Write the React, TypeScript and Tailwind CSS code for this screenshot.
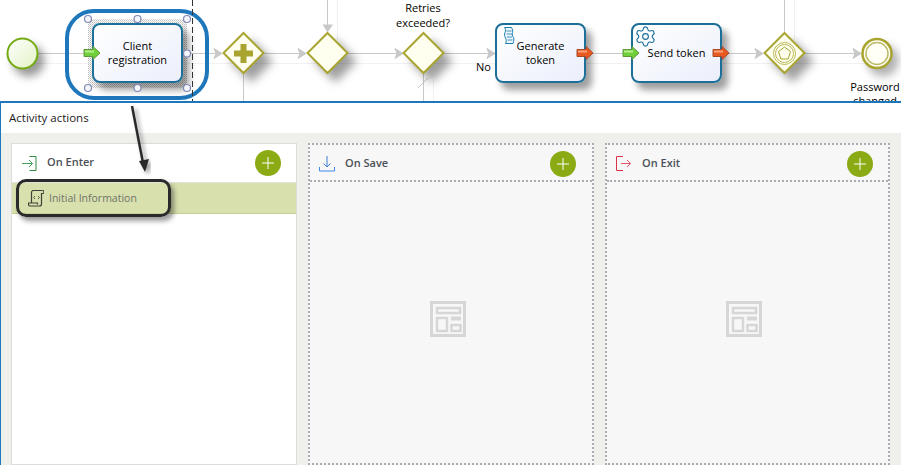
import { Settings } from "lucide-react";

const FLOW = "#c9c9c9";
const GATE = "#a8a42f";

const Diamond = ({ cx, children }: { cx: number; children?: React.ReactNode }) => (
  <g>
    <polygon
      points={`${cx},33 ${cx + 20},53 ${cx},73 ${cx - 20},53`}
      fill="#fffff0"
      stroke={GATE}
      strokeWidth="2"
      className="drop-shadow-[8px_8px_5px_rgba(0,0,0,0.38)]"
    />
    {children}
  </g>
);

const FlowHead = ({ x }: { x: number }) => (
  <polygon points={`${x},48.5 ${x + 8},53.5 ${x},58.5 ${x + 2},53.5`} fill="#c8c8c8" stroke="#c8c8c8" />
);

const PortArrow = ({ x, out }: { x: number; out?: boolean }) => (
  <svg width="18" height="16" viewBox="0 0 18 16" className="absolute" style={{ left: x, top: 45 }}>
    <polygon
      points="1,4.5 10,4.5 10,1.5 17,8 10,14.5 10,11.5 1,11.5"
      fill={out ? "#e9581f" : "#6fd03c"}
      stroke={out ? "#a8482a" : "#5f9a3a"}
    />
    <rect x="2" y="5.5" width="9" height="2" fill={out ? "#f7a27c" : "#b6ee8c"} />
  </svg>
);

const Task = ({ left, children }: { left: number; children: React.ReactNode }) => (
  <div
    className="absolute top-[23px] flex h-[60px] w-[91px] items-center justify-center rounded-lg border-2 border-[#1b6f99] bg-gradient-to-br from-white to-[#ebeffb] text-center text-[11px] leading-[14px] text-black shadow-[6px_7px_7px_rgba(0,0,0,0.38)]"
    style={{ left }}
  >
    {children}
  </div>
);

const Diagram = () => (
  <div className="relative h-[101px] overflow-hidden bg-white">
    <svg width="901" height="101" className="absolute left-0 top-0">
      <defs>
        <linearGradient id="startFill" x1="0" y1="0" x2="1" y2="1">
          <stop offset="0" stopColor="#ffffff" />
          <stop offset="1" stopColor="#e2f3c4" />
        </linearGradient>
        <pattern id="hatch" width="2" height="2" patternUnits="userSpaceOnUse">
          <rect width="1" height="1" fill="#bdbdbd" />
          <rect x="1" y="1" width="1" height="1" fill="#d4d4d4" />
        </pattern>
      </defs>

      {/* connector shadows */}
      <g stroke="#f1f1f1" strokeWidth="1">
        <line x1="30" y1="63.5" x2="880" y2="63.5" />
        <line x1="337.5" y1="0" x2="337.5" y2="40" />
        <line x1="433.5" y1="80" x2="433.5" y2="101" />
        <line x1="794.5" y1="0" x2="794.5" y2="40" />
      </g>

      {/* connectors */}
      <g stroke={FLOW} strokeWidth="1">
        <line x1="37" y1="53.5" x2="88" y2="53.5" />
        <line x1="183" y1="53.5" x2="218" y2="53.5" />
        <line x1="263" y1="53.5" x2="303" y2="53.5" />
        <line x1="347" y1="53.5" x2="398" y2="53.5" />
        <line x1="443" y1="53.5" x2="490" y2="53.5" />
        <line x1="590" y1="53.5" x2="630" y2="53.5" />
        <line x1="726" y1="53.5" x2="760" y2="53.5" />
        <line x1="804" y1="53.5" x2="858" y2="53.5" />
        <line x1="243.5" y1="73" x2="243.5" y2="101" />
        <line x1="327.5" y1="0" x2="327.5" y2="28" />
        <line x1="423.5" y1="73" x2="423.5" y2="101" />
        <line x1="784.5" y1="0" x2="784.5" y2="33" />
        <line x1="418" y1="88" x2="428" y2="78" />
      </g>
      <FlowHead x={214} />
      <FlowHead x={298} />
      <FlowHead x={395} />
      <FlowHead x={487} />
      <FlowHead x={755} />
      <FlowHead x={853} />
      <polygon points="322.5,24.5 333,24.5 327.5,32.5" fill="#c8c8c8" />

      {/* start and end events */}
      <circle
        cx="22.5"
        cy="53.5"
        r="15"
        fill="url(#startFill)"
        stroke="#74ab14"
        strokeWidth="2"
        className="drop-shadow-[6px_7px_4px_rgba(0,0,0,0.4)]"
      />
      <circle cx="877" cy="53.5" r="14.5" fill="#fffff5" stroke={GATE} strokeWidth="2.5" className="drop-shadow-[6px_7px_4px_rgba(0,0,0,0.3)]" />
      <circle cx="877" cy="53.5" r="11" fill="#fffff5" stroke="#bdbb6a" strokeWidth="1.5" />

      {/* gateways */}
      <Diamond cx={243.5}>
        <path d="M240.5 44h6v6.5h6.5v6h-6.5v6.5h-6v-6.5h-6.5v-6h6.5z" fill={GATE} />
      </Diamond>
      <Diamond cx={327.5} />
      <Diamond cx={423.5} />
      <Diamond cx={784.5}>
        <circle cx="784.5" cy="53.5" r="11" fill="none" stroke={GATE} strokeWidth="0.8" />
        <circle cx="784.5" cy="53.5" r="9" fill="none" stroke={GATE} strokeWidth="0.8" />
        <polygon points="784.5,47 790.5,51.5 788.2,59 780.8,59 778.5,51.5" fill="none" stroke={GATE} />
      </Diamond>

      {/* selected element frame */}
      <rect x="88" y="19" width="99" height="69" fill="url(#hatch)" />
      <rect x="67" y="11" width="140" height="87" rx="27" fill="none" stroke="#1f77bb" strokeWidth="4" />
    </svg>

    <Task left={92}>
      Client
      <br />
      registration
    </Task>
    <Task left={495}>
      <span>
        Generate
        <br />
        token
      </span>
    </Task>
    <Task left={631}>Send token</Task>

    <svg width="901" height="101" className="absolute left-0 top-0">
      <g fill="#f4f5fb" stroke="#7f88b4" strokeWidth="1.2">
        <circle cx="88" cy="19" r="3.5" />
        <circle cx="137.5" cy="19" r="3.5" />
        <circle cx="187" cy="19" r="3.5" />
        <circle cx="187" cy="53.5" r="3.5" />
        <circle cx="88" cy="88" r="3.5" />
        <circle cx="137.5" cy="88" r="3.5" />
        <circle cx="187" cy="88" r="3.5" />
      </g>
      <line x1="192.5" y1="0" x2="192.5" y2="101" stroke="#333" strokeDasharray="6 3" />
    </svg>

    <PortArrow x={83} />
    <PortArrow x={576} out />
    <PortArrow x={622} />
    <PortArrow x={712} out />

    {/* script task marker */}
    <svg width="12" height="18" viewBox="0 0 12 18" fill="none" stroke="#1b7fb0" className="absolute left-[503px] top-[27px]">
      <path d="M1.5.5h7c1 2 1.500 3 1 5s-.5 3 1 5c.5 2 .5 3.500-.5 6H2.500c1-2 1-3.500 0-5.500S1 7.500 2 5.500 2.500 2 1.500.5z" fill="#eef5fb" />
      <path d="M3.500 4h5M3.500 7h5.500M4 10h5M4.500 13h5" strokeWidth="0.8" />
    </svg>
    <Settings size={23} strokeWidth={1.2} className="absolute left-[634px] top-[25px] text-[#1b6f99]" />

    <div className="absolute left-[383px] top-0 w-20 text-center text-[11px] leading-[15px] text-black">
      Retries
      <br />
      exceeded?
    </div>
    <div className="absolute left-[476px] top-[59px] text-[11px] leading-[15px] text-black">No</div>
    <div className="absolute left-[835px] top-[80px] w-20 text-center text-[11px] leading-[14px] text-black">
      Password
      <br />
      changed
    </div>
  </div>
);

const AddButton = () => (
  <button className="flex h-[26px] w-[26px] shrink-0 items-center justify-center rounded-full bg-[#8aab13]">
    <svg width="12" height="12" viewBox="0 0 12 12">
      <path d="M6 0v12M0 6h12" stroke="#fff" strokeWidth="1" />
    </svg>
  </button>
);

const EnterIcon = () => (
  <svg width="15" height="15" viewBox="0 0 15 15" fill="none">
    <path d="M7.500.5h6.500v14H7.500" stroke="#2f8a3e" />
    <path d="M0 7.500h10.500M7 4l3.500 3.500L7 11" stroke="#46a35a" />
  </svg>
);

const SaveIcon = () => (
  <svg width="16" height="16" viewBox="0 0 16 16" fill="none">
    <path d="M8 0v10.500M4.500 7.500 8 11l3.500-3.500" stroke="#3f80dc" />
    <path d="M.5 11v4h15v-4" stroke="#3a8ce8" />
  </svg>
);

const ExitIcon = () => (
  <svg width="15" height="15" viewBox="0 0 15 15" fill="none">
    <path d="M7 .5H.5v14H7" stroke="#dc3348" />
    <path d="M5 7.500h9.500M11 4l3.500 3.500L11 11" stroke="#e0566a" />
  </svg>
);

const LayoutPlaceholder = () => (
  <svg width="36" height="36" viewBox="0 0 36 36" fill="none" stroke="#d6d6d6" strokeWidth="3">
    <rect x="1.500" y="1.500" width="33" height="33" />
    <rect x="7" y="7" width="23" height="5" strokeWidth="2.500" />
    <rect x="7" y="17" width="10" height="13" strokeWidth="2.500" />
    <rect x="21" y="15.500" width="10" height="4" fill="#d6d6d6" stroke="none" />
    <rect x="21.500" y="24" width="9" height="6" strokeWidth="2.500" />
  </svg>
);

const EmptyColumn = ({ title, icon, last }: { title: string; icon: React.ReactNode; last?: boolean }) => (
  <div className={`flex flex-col border-2 border-dotted border-[#a9adb3] bg-[#f7f7f7] ${last ? "w-[285px]" : "w-[286px]"}`}>
    <div className={`flex h-[37px] shrink-0 items-center border-b-2 border-dotted border-[#a9adb3] pl-[9px] pt-[2px] ${last ? "pr-[15px]" : "pr-[16px]"}`}>
      <div className="flex w-[26px] shrink-0">{icon}</div>
      <span className="flex-1 text-[11px] font-semibold text-[#4b5058]">{title}</span>
      <AddButton />
    </div>
    <div className="flex flex-1 items-center justify-center pb-2 pr-[7px]">
      <LayoutPlaceholder />
    </div>
  </div>
);

const App = () => (
  <div className="h-[465px] w-[901px] overflow-hidden bg-white font-['Open_Sans',sans-serif]">
    <Diagram />
    <div className="relative flex h-[364px] flex-col border-l border-t-2 border-[#1f77bb]">
      <div className="flex h-[30px] shrink-0 items-center bg-white pl-2 text-[11.5px] text-[#1c1c1c]">
        Activity actions
      </div>
      <div className="flex flex-1 gap-[11px] bg-[#eff0ec] pl-[10px] pt-[10px]">
        <div className="flex w-[286px] flex-col border border-[#dcdcdc] bg-white">
          <div className="flex h-[39px] shrink-0 items-center border-b border-[#e2e2e2] pl-[10px] pr-[15px]">
            <div className="flex w-[25px] shrink-0">
              <EnterIcon />
            </div>
            <span className="mb-[2px] flex-1 text-[11px] font-semibold text-[#4b5058]">On Enter</span>
            <AddButton />
          </div>
          <div className="flex h-[31px] items-center gap-[3px] border-b border-[#c5cf96] bg-[#d8e0ae] pl-4 pt-[1px] text-[10.5px] text-[#6f7368]">
            <svg width="16" height="17" viewBox="0 0 16 17" fill="none" stroke="#3c4238" strokeWidth="1.2">
              <path d="M3.500 13V2.500a2 2 0 0 1 2-2h9" />
              <path d="M14.500.5a1.500 1.500 0 0 1 0 3h-1V14a2 2 0 0 1-2 2H2a1.500 1.500 0 0 1-1.500-1.500V13h9v1.500" />
              <path d="M7 6 5.500 7.500 7 9M10 6l1.500 1.500L10 9" stroke="#5c5c52" strokeWidth="1" />
            </svg>
            <span className="pl-[2px]">Initial Information</span>
          </div>
        </div>
        <EmptyColumn title="On Save" icon={<SaveIcon />} />
        <EmptyColumn title="On Exit" icon={<ExitIcon />} last />
      </div>

      {/* callout drawn over the screenshot */}
      <div className="absolute left-[15px] top-[76px] h-[38px] w-[155px] rounded-[10px] border-[3px] border-[#2a2a2a] shadow-[3px_4px_5px_rgba(0,0,0,0.4)]" />
      <svg width="30" height="80" className="absolute left-[120px] top-0">
        <g className="drop-shadow-[3px_3px_2px_rgba(0,0,0,0.4)]">
          <line x1="11" y1="3" x2="22" y2="60" stroke="#2a2a2a" strokeWidth="2.5" />
          <polygon points="18,58 28,56 24,69" fill="#2a2a2a" />
        </g>
      </svg>
    </div>
  </div>
);

export default App;
